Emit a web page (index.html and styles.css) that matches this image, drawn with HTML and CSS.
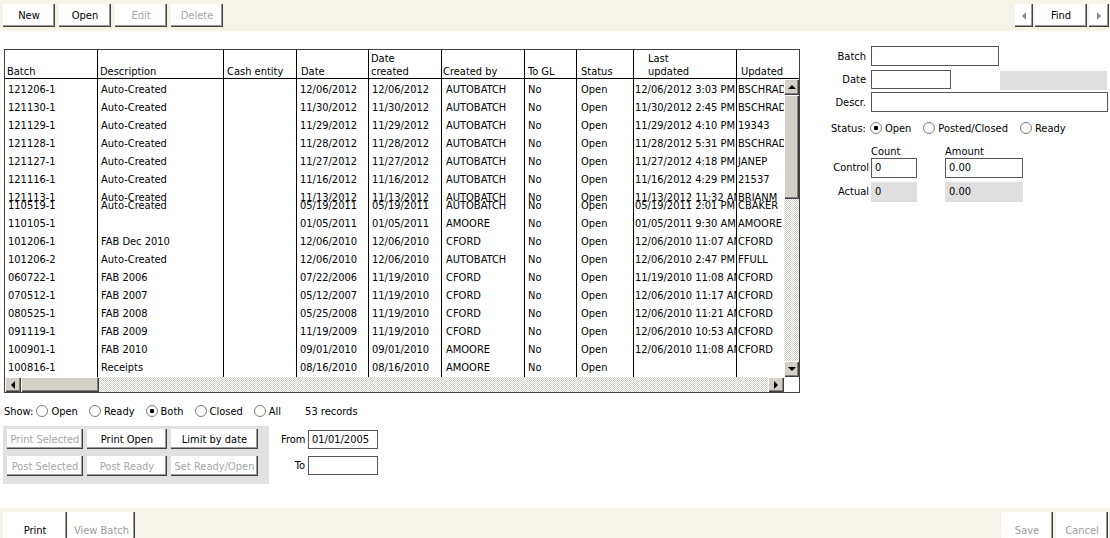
FILE: index.html
```html
<!doctype html>
<html>
<head>
  <meta charset="utf-8">
  <title>Batches</title>
  <link rel="stylesheet" href="styles.css">
</head>
<body>

  <div class="toolbar">
    <div class="btns">
      <button class="btn">New</button>
      <button class="btn">Open</button>
      <button class="btn" disabled>Edit</button>
      <button class="btn" disabled>Delete</button>
    </div>
    <div class="btns find">
      <button class="btn arrow"><span class="tri tri-left"></span></button>
      <button class="btn">Find</button>
      <button class="btn arrow wide"><span class="tri tri-right"></span></button>
    </div>
  </div>

  <div class="main">
    <div class="left">

      <div class="grid">
        <div class="head">
          <div class="hc">Batch</div>
          <div class="hc">Description</div>
          <div class="hc">Cash entity</div>
          <div class="hc">Date</div>
          <div class="hc">Date<br>created</div>
          <div class="hc">Created by</div>
          <div class="hc">To GL</div>
          <div class="hc">Status</div>
          <div class="hc">Last<br>updated</div>
          <div class="hc">Updated</div>
        </div>
        <div class="mid">
          <div class="rows" id="rows"></div>
          <div class="vscroll">
            <div class="sbtn"><span class="tri tri-up"></span></div>
            <div class="vthumb"></div>
            <div class="track"></div>
            <div class="sbtn"><span class="tri tri-down"></span></div>
          </div>
        </div>
        <div class="hscroll">
          <div class="sbtn"><span class="tri tri-left dark"></span></div>
          <div class="hthumb"></div>
          <div class="track"></div>
          <div class="sbtn"><span class="tri tri-right dark"></span></div>
          <div class="corner"></div>
        </div>
      </div>

      <div class="show">
        <span class="caption">Show:</span>
        <span class="opt"><span class="radio"></span>Open</span>
        <span class="opt"><span class="radio"></span>Ready</span>
        <span class="opt"><span class="radio on"></span>Both</span>
        <span class="opt"><span class="radio"></span>Closed</span>
        <span class="opt"><span class="radio"></span>All</span>
        <span class="count">53 records</span>
      </div>

      <div class="actions">
        <div class="panel">
          <button class="btn" disabled>Print Selected</button>
          <button class="btn">Print Open</button>
          <button class="btn">Limit by date</button>
          <button class="btn" disabled>Post Selected</button>
          <button class="btn" disabled>Post Ready</button>
          <button class="btn" disabled>Set Ready/Open</button>
        </div>
        <div class="range">
          <label>From</label><input type="text" value="01/01/2005">
          <label>To</label><input type="text">
        </div>
      </div>
    </div>

    <div class="details">
      <div class="field"><label>Batch</label><input type="text" class="in-batch"></div>
      <div class="field"><label>Date</label><input type="text" class="in-date"><span class="ro ro-date"></span></div>
      <div class="field"><label>Descr.</label><input type="text" class="in-descr"></div>

      <div class="status">
        <span class="caption">Status:</span>
        <span class="opt"><span class="radio on"></span>Open</span>
        <span class="opt"><span class="radio"></span>Posted/Closed</span>
        <span class="opt"><span class="radio"></span>Ready</span>
      </div>

      <div class="totals">
        <span></span><span class="th">Count</span><span class="th">Amount</span>
        <label>Control</label><input type="text" class="in-count" value="0"><input type="text" class="in-amount" value="0.00">
        <label>Actual</label><span class="ro in-count">0</span><span class="ro in-amount">0.00</span>
      </div>
    </div>
  </div>

  <div class="footer">
    <div class="tabs">
      <button class="tab tab-print">Print</button>
      <button class="tab tab-view" disabled>View Batch</button>
    </div>
    <div class="tabs">
      <button class="tab" disabled>Save</button>
      <button class="tab" disabled>Cancel</button>
    </div>
  </div>

  <script>
    const batches = [
      ["121206-1", "Auto-Created", "", "12/06/2012", "12/06/2012", "AUTOBATCH", "No", "Open", "12/06/2012 3:03 PM", "BSCHRADER"],
      ["121130-1", "Auto-Created", "", "11/30/2012", "11/30/2012", "AUTOBATCH", "No", "Open", "11/30/2012 2:45 PM", "BSCHRADER"],
      ["121129-1", "Auto-Created", "", "11/29/2012", "11/29/2012", "AUTOBATCH", "No", "Open", "11/29/2012 4:10 PM", "19343"],
      ["121128-1", "Auto-Created", "", "11/28/2012", "11/28/2012", "AUTOBATCH", "No", "Open", "11/28/2012 5:31 PM", "BSCHRADER"],
      ["121127-1", "Auto-Created", "", "11/27/2012", "11/27/2012", "AUTOBATCH", "No", "Open", "11/27/2012 4:18 PM", "JANEP"],
      ["121116-1", "Auto-Created", "", "11/16/2012", "11/16/2012", "AUTOBATCH", "No", "Open", "11/16/2012 4:29 PM", "21537"],
      ["121113-1", "Auto-Created", "", "11/13/2012", "11/13/2012", "AUTOBATCH", "No", "Open", "11/13/2012 11:32 AM", "BRIANM"],
      ["110519-1", "Auto-Created", "", "05/19/2011", "05/19/2011", "AUTOBATCH", "No", "Open", "05/19/2011 2:01 PM", "CBAKER"],
      ["110105-1", "", "", "01/05/2011", "01/05/2011", "AMOORE", "No", "Open", "01/05/2011 9:30 AM", "AMOORE"],
      ["101206-1", "FAB Dec 2010", "", "12/06/2010", "12/06/2010", "CFORD", "No", "Open", "12/06/2010 11:07 AM", "CFORD"],
      ["101206-2", "Auto-Created", "", "12/06/2010", "12/06/2010", "AUTOBATCH", "No", "Open", "12/06/2010 2:47 PM", "FFULL"],
      ["060722-1", "FAB 2006", "", "07/22/2006", "11/19/2010", "CFORD", "No", "Open", "11/19/2010 11:08 AM", "CFORD"],
      ["070512-1", "FAB 2007", "", "05/12/2007", "11/19/2010", "CFORD", "No", "Open", "12/06/2010 11:17 AM", "CFORD"],
      ["080525-1", "FAB 2008", "", "05/25/2008", "11/19/2010", "CFORD", "No", "Open", "12/06/2010 11:21 AM", "CFORD"],
      ["091119-1", "FAB 2009", "", "11/19/2009", "11/19/2010", "CFORD", "No", "Open", "12/06/2010 10:53 AM", "CFORD"],
      ["100901-1", "FAB 2010", "", "09/01/2010", "09/01/2010", "AMOORE", "No", "Open", "12/06/2010 11:08 AM", "CFORD"],
      ["100816-1", "Receipts", "", "08/16/2010", "08/16/2010", "AMOORE", "No", "Open", "", ""]
    ];

    // the grid repaints 121113-1 only partly, the next row lands on top of it
    const squashed = "121113-1";

    let html = "";
    for (const b of batches) {
      const cls = b[0] === squashed ? "row squashed" : "row";
      html += `<div class="${cls}">` + b.map(v => `<div>${v}</div>`).join("") + `</div>`;
    }
    document.getElementById("rows").innerHTML = html;
  </script>

</body>
</html>
```

FILE: styles.css
```css
body {
  margin: 0;
  width: 1110px;
  height: 538px;
  overflow: hidden;
  display: flex;
  flex-direction: column;
  background: #fff;
  color: #000;
  font: 11px "DejaVu Sans Condensed", "Liberation Sans", sans-serif;
}
button, input {
  font: inherit;
}

/* top and bottom bars */
.toolbar {
  height: 31px;
  flex: none;
  box-sizing: border-box;
  padding: 4px 1px 0 3px;
  display: flex;
  justify-content: space-between;
  background: #f6f3e8;
}
.btns {
  display: flex;
  gap: 4px;
}
.find {
  gap: 2px;
}
.btn {
  width: 52px;
  height: 23px;
  padding: 0;
  border: 0;
  background: #fff;
  color: #000;
  box-shadow: inset -1px -1px #404040, inset -2px -2px #9a9a9a;
}
.btn:disabled {
  color: #a6a6a6;
}
.btn.arrow {
  width: 18px;
}
.btn.arrow.wide {
  width: 20px;
}

.tri {
  display: inline-block;
  width: 0;
  height: 0;
  vertical-align: middle;
}
.tri-left {
  border-top: 4px solid transparent;
  border-bottom: 4px solid transparent;
  border-right: 4px solid #8c8c8c;
}
.tri-right {
  border-top: 4px solid transparent;
  border-bottom: 4px solid transparent;
  border-left: 4px solid #8c8c8c;
}
.tri-up {
  border-left: 4px solid transparent;
  border-right: 4px solid transparent;
  border-bottom: 4px solid #000;
}
.tri-down {
  border-left: 4px solid transparent;
  border-right: 4px solid transparent;
  border-top: 4px solid #000;
}
.tri-left.dark {
  border-right-color: #000;
}
.tri-right.dark {
  border-left-color: #000;
}

.footer {
  height: 30px;
  flex: none;
  box-sizing: border-box;
  padding: 4px 2px 0 3px;
  display: flex;
  justify-content: space-between;
  background: #f6f3e8;
}
.tabs {
  display: flex;
  gap: 3px;
}
.tab {
  width: 52px;
  height: 26px;
  padding: 10px 0 0 0;
  border: 0;
  background: #fff;
  color: #000;
  box-shadow: inset -1px 0 #404040, inset -2px 0 #9a9a9a;
}
.tab:disabled {
  color: #9c9c9c;
}
.tab-print {
  width: 64px;
  margin-right: -2px;
}
.tab-view {
  width: 67px;
}

/* main area */
.main {
  flex: 1;
  display: flex;
}
.left {
  padding: 18px 0 0 4px;
}

/* batch grid */
.grid {
  width: 794px;
  border: 1px solid #404040;
}
.head {
  display: grid;
  grid-template-columns: 92px 126px 73px 72px 73px 83px 52px 57px 103px 63px;
  height: 28px;
  border-bottom: 1px solid #000;
}
.hc {
  display: flex;
  align-items: flex-end;
  padding: 0 0 0 3px;
  border-left: 1px solid #000;
  line-height: 13px;
  white-space: nowrap;
}
.hc:first-child {
  border-left: 0;
  padding-left: 2px;
}
.hc:nth-child(2), .hc:nth-child(5) {
  padding-left: 2px;
}
.hc:nth-child(4), .hc:nth-child(8) {
  padding-left: 4px;
}
.hc:nth-child(6) {
  padding-left: 1px;
}
.hc:nth-child(9) {
  padding-left: 14px;
}
.hc:nth-child(10) {
  padding-left: 4px;
}

.mid {
  display: flex;
  height: 298px;
}
.rows {
  width: 779px;
  box-sizing: border-box;
  padding-top: 2px;
  overflow: hidden;
}
.row {
  display: grid;
  grid-template-columns: 92px 126px 73px 72px 73px 83px 52px 57px 103px 48px;
  height: 18px;
  line-height: 18px;
}
.row:first-child > div {
  margin-top: -2px;
  padding-top: 2px;
}
.row.squashed {
  height: 8px;
}
.row > div {
  border-left: 1px solid #000;
  padding-left: 3px;
  white-space: nowrap;
  overflow-x: clip;
}
.row > div:first-child {
  border-left: 0;
}
.row > div:nth-child(6), .row > div:nth-child(8) {
  padding-left: 4px;
}
.row > div:nth-child(9), .row > div:nth-child(10) {
  padding-left: 1px;
}

/* scrollbars */
.vscroll {
  width: 15px;
  display: flex;
  flex-direction: column;
}
.sbtn {
  width: 15px;
  height: 16px;
  flex: none;
  display: flex;
  align-items: center;
  justify-content: center;
  background: #d4d0c8;
  box-shadow: inset 1px 1px #fff, inset -1px -1px #404040, inset -2px -2px #808080;
}
.hscroll .sbtn {
  width: 16px;
  height: 15px;
}
.vthumb, .hthumb {
  flex: none;
  background: #d4d0c8;
  box-shadow: inset 1px 1px #fff, inset -1px -1px #404040, inset -2px -2px #808080;
}
.vthumb {
  height: 104px;
}
.hthumb {
  width: 78px;
}
.track {
  flex: 1;
  background: repeating-conic-gradient(#d4d0c8 0 25%, #fff 0 50%) 0 0 / 2px 2px;
}
.hscroll {
  display: flex;
  height: 15px;
}
.corner {
  width: 15px;
  background: #fff;
}

/* radio rows */
.show, .status {
  display: flex;
  align-items: center;
  height: 14px;
}
.show {
  margin-top: 11px;
}
.caption {
  margin-right: 3px;
}
.opt {
  display: inline-flex;
  align-items: center;
  gap: 3px;
  margin-right: 11px;
}
.radio {
  width: 10px;
  height: 10px;
  border: 1px solid #7b7b7b;
  border-radius: 50%;
  background: #fff;
}
.radio.on {
  background: radial-gradient(circle, #000 0 2px, #fff 2.5px);
}
.count {
  margin-left: 13px;
}

/* print / post panel */
.actions {
  display: flex;
  margin-top: 8px;
}
.panel {
  margin-left: -1px;
  width: 266px;
  height: 58px;
  box-sizing: border-box;
  padding: 3px 4px;
  display: grid;
  grid-template-columns: 76px 80px 87px;
  grid-template-rows: 20px 20px;
  column-gap: 4px;
  row-gap: 7px;
  background: #e0e0e0;
}
.panel .btn {
  width: auto;
  height: 20px;
}
.range {
  margin: 4px 0 0 12px;
  display: grid;
  grid-template-columns: 24px 70px;
  column-gap: 3px;
  row-gap: 7px;
  align-items: center;
  align-content: start;
}
.range label {
  text-align: right;
}
input {
  height: 19px;
  box-sizing: border-box;
  padding: 0 3px;
  border: 1px solid #555;
  background: #fff;
  color: #000;
  outline: none;
}
.range input {
  width: 70px;
}

/* batch details */
.details {
  margin-left: 30px;
  padding-top: 15px;
}
.field {
  display: flex;
  align-items: center;
  height: 20px;
  margin-bottom: 3px;
}
.field label {
  width: 36px;
  margin-right: 5px;
  text-align: right;
}
.in-batch {
  width: 128px;
  height: 20px;
}
.in-date {
  width: 80px;
}
.in-descr {
  width: 237px;
  height: 20px;
}
.ro {
  display: block;
  box-sizing: border-box;
  height: 19px;
  line-height: 19px;
  padding-left: 4px;
  background: #dfdfdf;
}
.ro-date {
  width: 107px;
  margin: 2px 0 0 49px;
}
.status {
  margin-top: 9px;
}
.status .caption {
  margin-left: 1px;
  margin-right: 4px;
}
.status .opt {
  margin-right: 12px;
}
.totals {
  margin-top: 10px;
  display: grid;
  grid-template-columns: 41px 74px 78px;
  grid-template-rows: 13px 24px 20px;
  align-items: start;
}
.totals .th {
  line-height: 13px;
}
.totals label {
  padding-right: 2px;
  line-height: 20px;
  text-align: right;
}
.totals input, .totals .ro {
  height: 20px;
  line-height: 20px;
}
.in-count {
  width: 46px;
}
.in-amount {
  width: 78px;
}
```
